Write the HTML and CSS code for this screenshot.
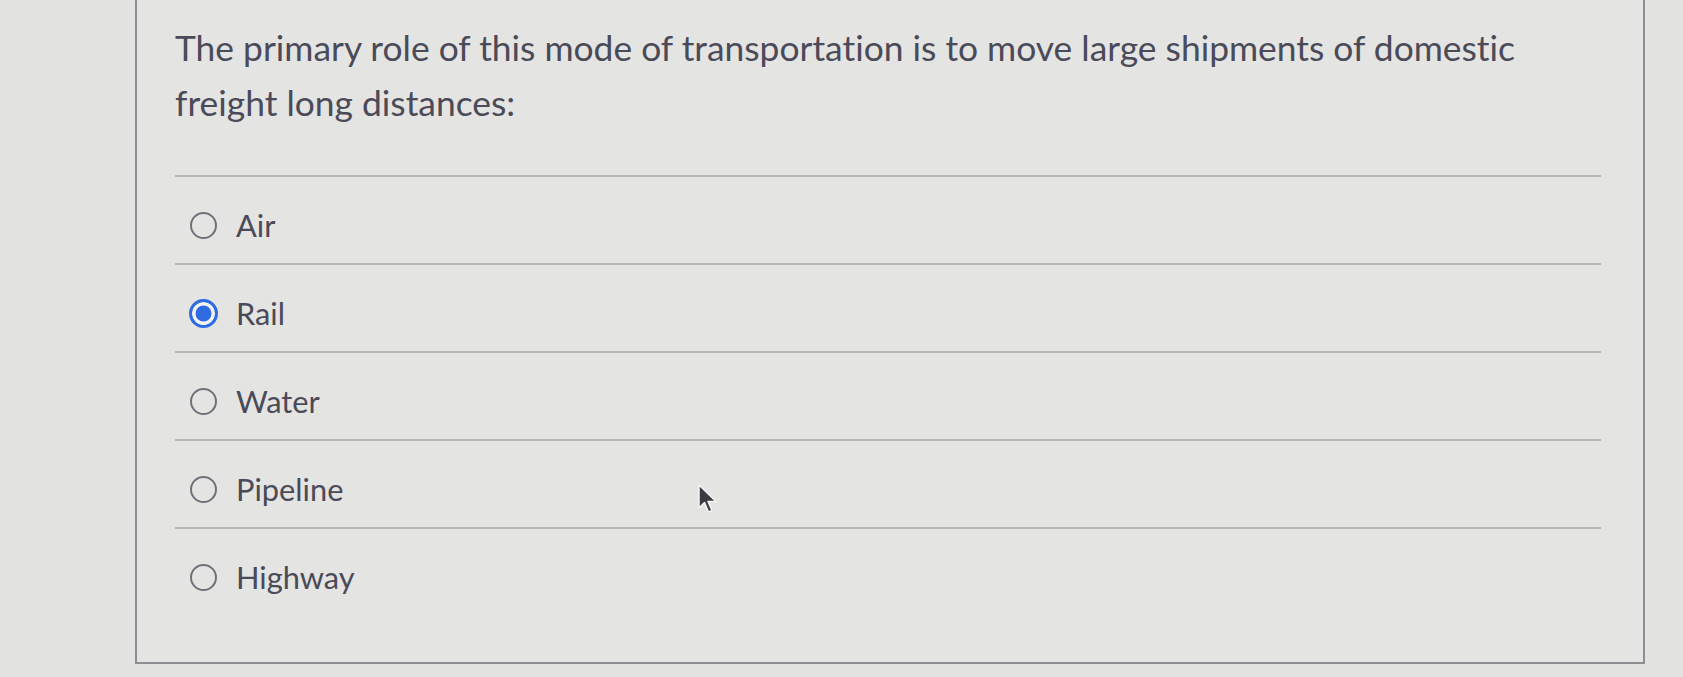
FILE: index.html
```html
<!DOCTYPE html>
<html>
<head>
<meta charset="utf-8">
<link rel="stylesheet" href="styles.css">
</head>
<body>
<div class="page">
  <div class="card">
    <p class="question">The primary role of this mode of transportation is to move large shipments of domestic freight long distances:</p>
    <ul class="options">
      <li class="option"><span class="radio"></span><span class="label">Air</span></li>
      <li class="option"><span class="radio checked"></span><span class="label">Rail</span></li>
      <li class="option"><span class="radio"></span><span class="label">Water</span></li>
      <li class="option"><span class="radio"></span><span class="label">Pipeline</span></li>
      <li class="option"><span class="radio"></span><span class="label">Highway</span></li>
    </ul>
  </div>
  <svg class="cursor" width="22" height="32" viewBox="0 0 22 32">
    <path d="M2 1 L2 24 L7.5 18.5 L11.5 28 L15 26.5 L11 17.5 L19 17.5 Z" fill="#3a3a40" stroke="#f4f4f4" stroke-width="1.5" stroke-linejoin="round"/>
  </svg>
</div>
</body>
</html>
```

FILE: styles.css
```css
html, body {
  margin: 0;
  padding: 0;
  background: #e2e2e0;
}
.page {
  position: relative;
  width: 1683px;
  height: 677px;
  overflow: hidden;
  font-family: Lato, "Open Sans", sans-serif;
  font-variant-ligatures: none;
  color: #4a4a58;
}
.card {
  margin-left: 135px;
  width: 1510px;
  height: 664px;
  box-sizing: border-box;
  border: 2px solid #8e8e92;
  border-top: none;
  padding: 20px 42px 0 38px;
  background: #e4e4e2;
}
.question {
  margin: 0 0 45px 0;
  font-size: 35.4px;
  line-height: 55px;
  width: 1380px;
}
.options {
  list-style: none;
  margin: 0;
  padding: 0;
}
.option {
  display: flex;
  align-items: center;
  height: 88px;
  box-sizing: border-box;
  border-top: 2px solid #b8b8b8;
  padding-top: 10px;
  padding-left: 15px;
}
.radio {
  width: 27px;
  height: 27px;
  border: 2px solid #707078;
  border-radius: 50%;
  box-sizing: border-box;
  margin-right: 19px;
  flex: none;
}
.radio.checked {
  border: 3px solid #2f6be3;
  background: #2f6be3;
  box-shadow: inset 0 0 0 3.5px #f4f4f6;
  width: 29px;
  height: 29px;
  margin-left: -1px;
  margin-right: 18px;
}
.label {
  font-size: 30.8px;
}
.cursor {
  position: absolute;
  left: 697px;
  top: 484px;
}
```
